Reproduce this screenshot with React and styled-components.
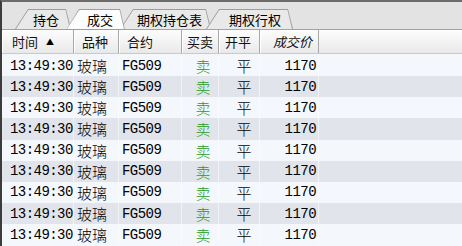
import React from "react";
import styled, { createGlobalStyle } from "styled-components";

const GlobalStyle = createGlobalStyle`
  html, body { margin: 0; padding: 0; background: #f4f7fc; }
  body { font-family: "Noto Sans CJK SC", "Noto Sans", sans-serif; }
`;

const Frame = styled.div`
  width: 462px;
  height: 246px;
  box-sizing: border-box;
  border-top: 2px solid #6c6c6c;
  border-left: 2px solid #3c3c3c;
  overflow: hidden;
  background: #f4f7fc;
  display: flex;
  flex-direction: column;
`;

const TabBar = styled.div`
  height: 28px;
  flex: none;
  box-sizing: border-box;
  background: #e3e3e3;
  border-bottom: 1px solid #a3a3a3;
  display: flex;
  align-items: flex-end;
  padding-left: 13px;
`;

const Tab = styled.div`
  position: relative;
  z-index: ${(p) => (p.$active ? 3 : 1)};
  width: ${(p) => p.$w}px;
  height: ${(p) => (p.$active ? 21 : 20)}px;
  margin-right: -5px;
  margin-bottom: ${(p) => (p.$active ? -1 : 0)}px;
  box-sizing: border-box;
  padding-left: ${(p) => p.$pad}px;
  display: flex;
  align-items: center;
  font-size: 13px;
  color: #000;
  &::before {
    content: "";
    position: absolute;
    inset: 0;
    z-index: 0;
    background: #9c9c9c;
    clip-path: polygon(0 100%, 13px 0, calc(100% - 5px) 0, 100% 100%);
  }
  &::after {
    content: "";
    position: absolute;
    inset: 1px 1px ${(p) => (p.$active ? 1 : 0)}px 1px;
    z-index: 0;
    background: ${(p) => (p.$active ? "#fdfdfd" : "#e9e9e9")};
    clip-path: polygon(0 100%, 12.3px 0, calc(100% - 4.5px) 0, 100% 100%);
  }
`;

const TabLabel = styled.span`
  position: relative;
  z-index: 1;
  line-height: 1;
`;

const cols = "72px 45px 63px 37px 41px 59px 1fr";

const HeaderRow = styled.div`
  display: grid;
  grid-template-columns: ${cols};
  height: 24px;
  flex: none;
  box-sizing: border-box;
  background: linear-gradient(#fdfdfd, #f1f1f1 60%, #e9e9e9);
  border-bottom: 1px solid #c9c9c9;
  margin-bottom: 1px;
`;

const HeadCell = styled.div`
  display: flex;
  align-items: center;
  justify-content: ${(p) => (p.$right ? "flex-end" : "flex-start")};
  padding: 0 ${(p) => (p.$right ? 6 : 0)}px 0 ${(p) => p.$pl || 0}px;
  font-size: 13px;
  color: #111;
  font-style: ${(p) => (p.$italic ? "italic" : "normal")};
  border-right: ${(p) => (p.$last ? "none" : "1px solid #a8a8a8")};
  box-shadow: ${(p) => (p.$last ? "none" : "inset 1px 0 0 #ffffff")};
  white-space: nowrap;
`;

const SortMark = styled.span`
  font-size: 8px;
  margin-left: 8px;
  color: #000;
`;

const Row = styled.div`
  display: grid;
  grid-template-columns: ${cols};
  height: 21.15px;
  flex: none;
  background: ${(p) => (p.$alt ? "#e1e4eb" : "#f4f7fc")};
`;

const Cell = styled.div`
  display: flex;
  align-items: center;
  justify-content: ${(p) =>
    p.$align === "right" ? "flex-end" : p.$align === "center" ? "center" : "flex-start"};
  padding-left: ${(p) => p.$pl || 0}px;
  padding-right: ${(p) => p.$pr || 0}px;
  border-right: ${(p) => (p.$last ? "none" : "1px solid rgba(255,255,255,0.55)")};
  white-space: nowrap;
  color: ${(p) => p.$color || "#000"};
  font-family: ${(p) =>
    p.$mono
      ? '"Liberation Mono", "Noto Sans CJK SC", monospace'
      : '"Noto Sans CJK SC", "Noto Sans", sans-serif'};
  font-size: ${(p) => (p.$mono ? "14px" : "15px")};
  font-weight: ${(p) => (p.$mono ? 400 : 300)};
  letter-spacing: ${(p) => (p.$mono ? "-0.55px" : "0")};
`;

const tabs = [
  { label: "持仓", w: 56, pad: 18 },
  { label: "成交", w: 59, pad: 21, active: true },
  { label: "期权持仓表", w: 91, pad: 17 },
  { label: "期权行权", w: 87, pad: 23 },
];

const rows = Array.from({ length: 9 }, () => ({
  time: "13:49:30",
  name: "玻璃",
  code: "FG509",
  side: "卖",
  oc: "平",
  price: "1170",
}));

export default function App() {
  return (
    <>
      <GlobalStyle />
      <Frame>
        <TabBar>
          {tabs.map((t) => (
            <Tab key={t.label} $w={t.w} $pad={t.pad} $active={t.active}>
              <TabLabel>{t.label}</TabLabel>
            </Tab>
          ))}
        </TabBar>
        <HeaderRow>
          <HeadCell $pl={10}>
            时间<SortMark>▲</SortMark>
          </HeadCell>
          <HeadCell $pl={8}>品种</HeadCell>
          <HeadCell $pl={8}>合约</HeadCell>
          <HeadCell $pl={5}>买卖</HeadCell>
          <HeadCell $pl={6}>开平</HeadCell>
          <HeadCell $right $italic>成交价</HeadCell>
          <HeadCell $last />
        </HeaderRow>
        {rows.map((r, i) => (
          <Row key={i} $alt={i % 2 === 1}>
            <Cell $mono $pl={8}>{r.time}</Cell>
            <Cell $pl={3}>{r.name}</Cell>
            <Cell $mono $pl={3}>{r.code}</Cell>
            <Cell $align="center" $pl={6} $color="#1e9e1e">{r.side}</Cell>
            <Cell $align="center" $pl={10}>{r.oc}</Cell>
            <Cell $mono $align="right" $pr={2}>{r.price}</Cell>
            <Cell $last />
          </Row>
        ))}
      </Frame>
    </>
  );
}
